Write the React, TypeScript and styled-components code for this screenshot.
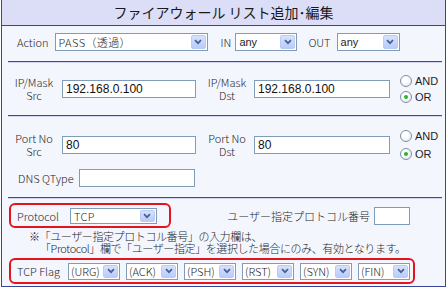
import React from "react";
import styled, { createGlobalStyle } from "styled-components";

const Global = createGlobalStyle`
  html, body { margin: 0; padding: 0; background: #ffffff; }
  body {
    font-family: "Noto Sans CJK JP", "Noto Sans", sans-serif;
    font-size: 11px;
    font-weight: 300;
    color: #1e1e1e;
  }
`;

const Frame = styled.div`
  box-sizing: border-box;
  width: 445px;
  height: 287px;
  margin-left: 1px;
  border: 1px solid #3a4499;
  border-top: none;
  background: #f4f6fd;
  display: flex;
  flex-direction: column;
`;

const TitleBar = styled.div`
  height: 25px;
  line-height: 25px;
  border-bottom: 1px solid #3a4499;
  background: #dcdef8;
  text-align: center;
  font-size: 14px;
  font-weight: 400;
  color: #1a1a1a;
`;

const Body = styled.div`
  flex: 1;
  padding: 0 3px 0 6px;
  display: flex;
  flex-direction: column;
`;

const Rule = styled.div`
  height: 0;
  border-top: 1px solid #3f48a6;
  border-bottom: 1px solid #d2d6f2;
`;

const Section = styled.div<{ $pt?: number; $pb?: number; $h?: number }>`
  display: flex;
  flex-direction: column;
  padding-top: ${(p) => p.$pt ?? 0}px;
  padding-bottom: ${(p) => p.$pb ?? 0}px;
  ${(p) => (p.$h ? `height: ${p.$h}px; box-sizing: border-box;` : "")}
`;

const Row = styled.div<{ $h?: number; $mt?: number; $pl?: number }>`
  display: flex;
  align-items: center;
  height: ${(p) => (p.$h ? `${p.$h}px` : "auto")};
  margin-top: ${(p) => p.$mt ?? 0}px;
  padding-left: ${(p) => p.$pl ?? 0}px;
`;

const Label = styled.span<{ $ml?: number; $mr?: number }>`
  margin-left: ${(p) => p.$ml ?? 0}px;
  margin-right: ${(p) => p.$mr ?? 0}px;
  white-space: nowrap;
  font-size: 11px;
`;

const StackLabel = styled.div<{ $w: number; $ml?: number }>`
  width: ${(p) => p.$w}px;
  margin-left: ${(p) => p.$ml ?? 0}px;
  text-align: center;
  font-size: 11px;
  line-height: 13px;
  white-space: nowrap;
`;

const SelectBox = styled.div<{ $w: number; $h?: number; $ml?: number }>`
  box-sizing: border-box;
  width: ${(p) => p.$w}px;
  height: ${(p) => p.$h ?? 18}px;
  margin-left: ${(p) => p.$ml ?? 0}px;
  border: 1px solid #7f9db9;
  background: #ffffff;
  display: flex;
  align-items: stretch;
  flex-shrink: 0;
`;

const SelectText = styled.span<{ $latin?: boolean; $tight?: boolean }>`
  flex: 1;
  min-width: 0;
  padding-left: ${(p) => (p.$tight ? 2 : 3)}px;
  display: flex;
  align-items: center;
  white-space: nowrap;
  overflow: hidden;
  font-size: 11px;
  font-family: ${(p) =>
    p.$latin
      ? '"Liberation Sans", Arial, sans-serif'
      : '"Noto Sans CJK JP", "Noto Sans", sans-serif'};
  letter-spacing: ${(p) => (p.$latin || p.$tight ? "0" : "0.4px")};
`;

const ArrowBtn = styled.span`
  box-sizing: border-box;
  width: 15px;
  flex-shrink: 0;
  margin: 1px;
  border: 1px solid #bccbf2;
  border-radius: 2px;
  background: linear-gradient(#d6e2fe, #b8cbfa);
  display: flex;
  align-items: center;
  justify-content: center;
`;

const TextInput = styled.input<{ $w: number; $ml?: number; $h?: number }>`
  box-sizing: border-box;
  width: ${(p) => p.$w}px;
  height: ${(p) => p.$h ?? 18}px;
  margin: 0 0 0 ${(p) => p.$ml ?? 0}px;
  padding: 0 3px;
  border: 1px solid #7f9db9;
  background: #ffffff;
  font-family: "Liberation Sans", Arial, sans-serif;
  font-size: 12px;
  color: #111;
  outline: none;
  flex-shrink: 0;
`;

const RadioGroup = styled.div<{ $ml?: number; $gap?: number }>`
  display: flex;
  flex-direction: column;
  gap: ${(p) => p.$gap ?? 5}px;
  margin-left: ${(p) => p.$ml ?? 0}px;
`;

const RadioItem = styled.label`
  display: flex;
  align-items: center;
  gap: 3px;
  font-size: 11px;
  line-height: 12px;
  font-family: "Liberation Sans", Arial, sans-serif;
  font-weight: 400;
`;

const RadioDot = styled.span<{ $on?: boolean }>`
  box-sizing: border-box;
  width: 12px;
  height: 12px;
  border-radius: 50%;
  border: 1px solid #7d8ea6;
  background: radial-gradient(circle at 40% 35%, #ffffff 30%, #dde2ea 100%);
  display: flex;
  align-items: center;
  justify-content: center;
  &::after {
    content: "";
    display: ${(p) => (p.$on ? "block" : "none")};
    width: 4px;
    height: 4px;
    border-radius: 50%;
    background: #2ab52a;
  }
`;

const RedBox = styled.div<{ $w?: number; $h: number; $mt?: number }>`
  box-sizing: border-box;
  ${(p) => (p.$w ? `width: ${p.$w}px;` : "")}
  height: ${(p) => p.$h}px;
  margin-top: ${(p) => p.$mt ?? 0}px;
  margin-left: 1px;
  border: 2px solid #e5141c;
  border-radius: 6px;
  display: flex;
  align-items: center;
  padding: 0 3px 0 6px;
  flex-shrink: 0;
`;

const UserProto = styled.div`
  display: flex;
  align-items: center;
  margin-left: auto;
  margin-right: 32px;
`;

const Note = styled.div`
  margin-top: 2px;
  padding-left: 21px;
  font-size: 11px;
  line-height: 12px;
  letter-spacing: -0.4px;
  white-space: nowrap;
`;

const NoteLine = styled.div<{ $indent?: number }>`
  padding-left: ${(p) => p.$indent ?? 0}px;
`;

const FlagRow = styled.div`
  display: flex;
  gap: 6px;
  margin-left: 8px;
`;

const Chevron = () => (
  <svg width="8" height="6" viewBox="0 0 8 6">
    <path d="M1 1.2 L4 4.2 L7 1.2" fill="none" stroke="#4a5f8e" strokeWidth="1.7" />
  </svg>
);

type SelProps = {
  w: number;
  h?: number;
  ml?: number;
  text: string;
  latin?: boolean;
  tight?: boolean;
};
const Select = ({ w, h, ml, text, latin, tight }: SelProps) => (
  <SelectBox $w={w} $h={h} $ml={ml}>
    <SelectText $latin={latin} $tight={tight}>
      {text}
    </SelectText>
    <ArrowBtn>
      <Chevron />
    </ArrowBtn>
  </SelectBox>
);

const Radio = ({ label, on }: { label: string; on?: boolean }) => (
  <RadioItem>
    <RadioDot $on={on} />
    {label}
  </RadioItem>
);

const flags = ["(URG)", "(ACK)", "(PSH)", "(RST)", "(SYN)", "(FIN)"];

export default function App() {
  return (
    <>
      <Global />
      <Frame>
        <TitleBar>ファイアウォール リスト追加･編集</TitleBar>
        <Body>
          <Section $h={35} $pt={7}>
            <Row $pl={9}>
              <Label $mr={6}>Action</Label>
              <Select w={153} text="PASS（透過）" />
              <Label $ml={13} $mr={4}>IN</Label>
              <Select w={62} text="any" latin />
              <Label $ml={11} $mr={6}>OUT</Label>
              <Select w={63} text="any" latin />
            </Row>
          </Section>
          <Rule />
          <Section $h={52}>
            <Row $h={52}>
              <StackLabel $w={52}>
                IP/Mask
                <br />
                Src
              </StackLabel>
              <TextInput $w={134} $ml={2} defaultValue="192.168.0.100" />
              <StackLabel $w={54} $ml={4}>
                IP/Mask
                <br />
                Dst
              </StackLabel>
              <TextInput $w={136} defaultValue="192.168.0.100" />
              <RadioGroup $ml={10} $gap={4}>
                <Radio label="AND" />
                <Radio label="OR" on />
              </RadioGroup>
            </Row>
          </Section>
          <Rule />
          <Section $pt={10} $h={80}>
            <Row $h={36}>
              <StackLabel $w={52}>
                Port No
                <br />
                Src
              </StackLabel>
              <TextInput $w={134} $ml={2} defaultValue="80" />
              <StackLabel $w={54} $ml={4}>
                Port No
                <br />
                Dst
              </StackLabel>
              <TextInput $w={136} defaultValue="80" />
              <RadioGroup $ml={10} $gap={6}>
                <Radio label="AND" />
                <Radio label="OR" on />
              </RadioGroup>
            </Row>
            <Row $h={18} $mt={6} $pl={10}>
              <Label $mr={5}>DNS QType</Label>
              <TextInput $w={116} defaultValue="" />
            </Row>
          </Section>
          <Rule />
          <Section>
            <Row $mt={4}>
              <RedBox $w={162} $h={25}>
                <Label $mr={11}>Protocol</Label>
                <Select w={87} h={16} text="TCP" />
              </RedBox>
              <UserProto>
                <Label $mr={4}>ユーザー指定プロトコル番号</Label>
                <TextInput $w={36} defaultValue="" />
              </UserProto>
            </Row>
            <Note>
              <NoteLine>※「ユーザー指定プロトコル番号」の入力欄は、</NoteLine>
              <NoteLine $indent={11}>
                「Protocol」欄で「ユーザー指定」を選択した場合にのみ、有効となります。
              </NoteLine>
            </Note>
            <Row $mt={4}>
              <RedBox $h={26}>
                <Label>TCP Flag</Label>
                <FlagRow>
                  {flags.map((f) => (
                    <Select key={f} w={52} h={17} text={f} tight />
                  ))}
                </FlagRow>
              </RedBox>
            </Row>
          </Section>
        </Body>
      </Frame>
    </>
  );
}
